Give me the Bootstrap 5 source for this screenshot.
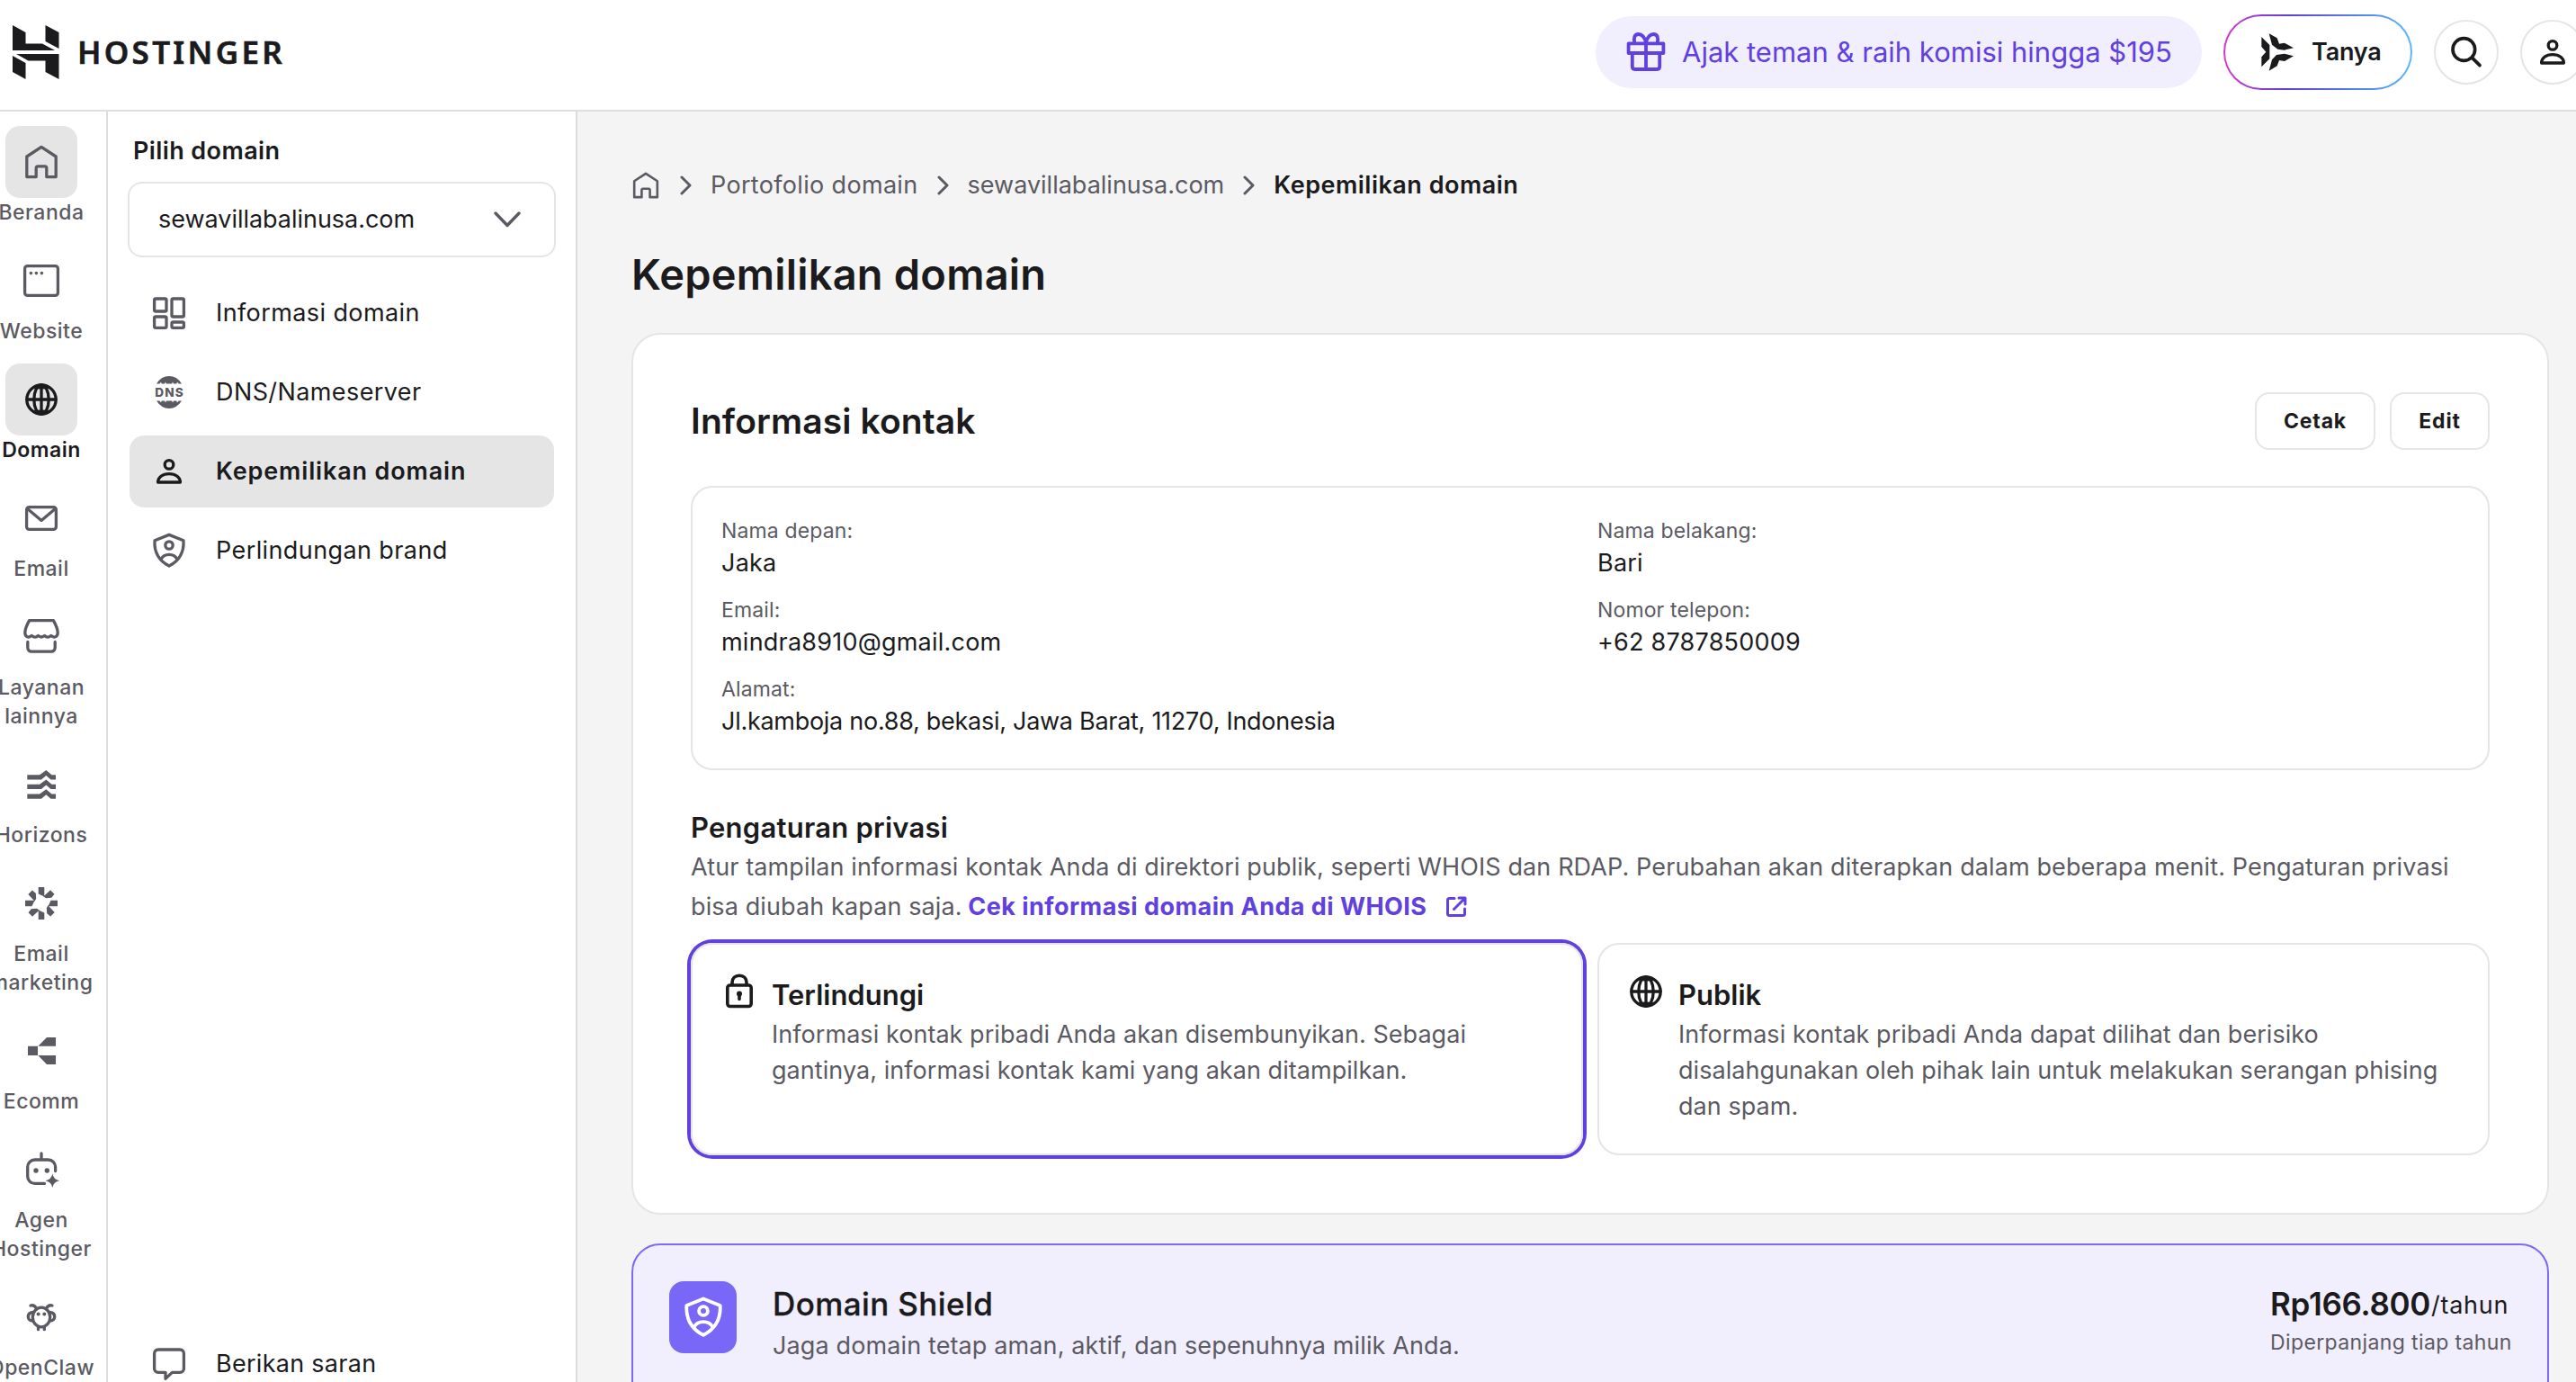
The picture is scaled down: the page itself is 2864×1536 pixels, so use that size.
<!DOCTYPE html>
<html lang="id">
<head>
<meta charset="utf-8">
<meta name="viewport" content="width=device-width, initial-scale=1">
<title>Kepemilikan domain</title>
<link href="https://cdn.jsdelivr.net/npm/bootstrap@5.3.0/dist/css/bootstrap.min.css" rel="stylesheet">
<style>
:root{--ink:#1b1b1d;--muted:#5b5a62;--line:#e5e5e5;--violet:#6040df;--soft:#f1eefd}
html,body{height:100%;overflow:hidden}
body{font-family:Inter,"Liberation Sans",sans-serif;font-size:27px;line-height:40px;color:var(--ink);background:#f4f4f4}
svg{display:block;flex:none;fill:none;stroke:currentColor;stroke-width:1.65;stroke-linejoin:round;stroke-linecap:round}
svg .solid{fill:currentColor;stroke:none}
a{color:inherit;text-decoration:none}
.ic{width:48px;height:48px}
.topbar{height:124px;border-bottom:2px solid #dedede;padding:0 0 6px 14px;flex:none}
.wordmark{font:600 35px/48px "Noto Sans","Open Sans",sans-serif;letter-spacing:3.3px;margin-left:20px;-webkit-text-stroke:.6px currentColor}
.topright{gap:24px;margin-right:-10px}
.promo{height:80px;width:674px;border-radius:40px;background:var(--soft);color:var(--violet);padding-left:32px;gap:16px;font-size:31px;white-space:nowrap}
.promo svg{stroke-width:1.9}
.ask{width:210px;height:84px;border:2px solid transparent;border-radius:42px;padding-left:38px;gap:10px;font-weight:600;letter-spacing:-.2px;background:linear-gradient(#fff,#fff) padding-box,linear-gradient(90deg,#d63bd1 0,#613fdd 34%,#5385ee 72%,#5cb8ff 100%) border-box}
.round-btn{width:72px;height:72px;border:2px solid var(--line);border-radius:50%;flex:none}
.find{stroke-width:11}
.rail{width:120px;border-right:2px solid #dcdcdc;padding-top:16px;gap:20px;flex:none}
.rail-item{width:200px;margin-left:-54px;font-size:23px;line-height:32px;font-weight:500;color:var(--muted);letter-spacing:.5px;text-align:center}
.rail-box{width:80px;height:80px;border-radius:16px;margin:0 auto}
.rail-box.on{background:#e5e5e5}
.rail-item.now,.rail-item.now .rail-box{color:var(--ink)}
.rail-item.now{font-weight:600;letter-spacing:.5px}
.heavy{stroke-width:3.3}
.side{width:522px;border-right:2px solid #dcdcdc;padding:24px 22px 0 22px;flex:none}
.side-label{font-weight:600;padding-left:6px;letter-spacing:.4px}
.picker{height:84px;border:2px solid var(--line);border-radius:16px;margin:14px 0 22px;padding:0 37px 0 32px;letter-spacing:-.03px}
.picker svg{stroke-width:3.4;color:var(--muted)}
.side-nav{gap:8px;padding:0 2px}
.side-link{height:80px;border-radius:16px;padding-left:20px;gap:28px;letter-spacing:.4px}
.side-link svg{color:var(--muted)}
.side-link.now{background:#e5e5e5;font-weight:600;letter-spacing:.85px}
.side-link.now svg{color:var(--ink)}
.side-foot{margin:auto 0 -20px;padding:0 2px}
.side-foot .side-link{letter-spacing:.28px}
.page{padding:62px 30px 0 60px;min-width:0;height:1412px;overflow:hidden}
.crumbs{gap:20px;color:var(--muted);margin-left:-3px}
.crumbs svg.home{width:38px;height:38px;margin-right:-2px}
.crumbs svg.chev{width:15px;height:22px;stroke-width:3}
.crumbs a:first-of-type{letter-spacing:.33px}
.crumbs b{font-weight:600;color:var(--ink);letter-spacing:.5px}
h1{font-size:47px;line-height:64px;font-weight:600;margin:47px 0 33px;letter-spacing:.18px}
.panel{background:#fff;border:2px solid var(--line);border-radius:32px;padding:64px}
h2{font-size:39px;line-height:48px;font-weight:600;margin:0;letter-spacing:.1px}
.act{height:64px;border:2px solid var(--line);border-radius:16px;font-size:23px;font-weight:700;letter-spacing:.8px;padding:0;color:var(--ink);background:#fff}
.act:first-child{width:134px}.act:last-child{width:111px}
.facts{margin-top:40px;border:2px solid var(--line);border-radius:24px;padding:32px;row-gap:16px;display:grid;grid-template-columns:974px 1fr}
.facts dt{font-size:23px;line-height:32px;font-weight:400;color:var(--muted);letter-spacing:.14px}
.facts dd{margin:0;letter-spacing:.22px}
.facts dd.long{letter-spacing:-.28px;white-space:nowrap}
h3{font-size:31px;line-height:46px;font-weight:600;margin:41px 0 0;letter-spacing:.25px}
.note{line-height:44px;color:var(--muted);letter-spacing:.115px;margin:-1px 0 18px;white-space:nowrap}
.note a{color:var(--violet);font-weight:700;letter-spacing:.45px;margin-left:-1px}
.note svg{display:inline-block;width:24px;height:24px;margin-left:14px;vertical-align:-3px;stroke-width:3}
.choice{border:2px solid var(--line);border-radius:24px;height:236px;padding:28px 0 0 28px;gap:12px;flex:1 1 0;min-width:0}
.choice.picked{box-shadow:0 0 0 4px var(--violet)}
.choice h4{font-size:31px;line-height:48px;font-weight:600;margin:4px 0 0}
.choice p,.shield p{color:var(--muted);margin:0;white-space:nowrap;letter-spacing:.05px}
.lock{stroke-width:3.6}
.shield{margin-top:32px;height:260px;border:2px solid #7c69f4;border-radius:32px;background:var(--soft);padding:40px;gap:40px}
.tile{width:75px;height:80px;border-radius:16px;background:#7967f7;color:#fff;flex:none}
.tile svg{width:56px;height:56px}
.shield h4{font-size:35px;line-height:48px;font-weight:500;margin:1px 0 3px;letter-spacing:.4px;-webkit-text-stroke:.3px currentColor}
.shield p{letter-spacing:.12px}
.price{width:268px;padding-top:1px}
.price b{font-size:35px;line-height:48px;font-weight:600;letter-spacing:-.3px}
.price span{position:relative;top:-2px;letter-spacing:.7px;margin-left:1px}
.price small{display:block;font-size:23px;line-height:36px;color:var(--muted);letter-spacing:.38px;white-space:nowrap;margin-top:1px}
</style>
<script src="https://cdn.jsdelivr.net/npm/bootstrap@5.3.0/dist/js/bootstrap.bundle.min.js"></script>
</head>
<body class="d-flex flex-column">
<svg width="0" height="0" class="d-none">
  <symbol id="home" viewBox="0 0 24 24"><path d="M3.900 9 12 3.700 20.100 9v11.300h-5.200v-4.900c0-.6-.4-1-1-1h-3.800c-.6 0-1 .4-1 1v4.900H3.900z"/></symbol>
  <symbol id="globe" viewBox="0 0 24 24"><circle cx="12" cy="12" r="8.100"/><ellipse cx="12" cy="12" rx="4.100" ry="8.100"/><path d="M12 4v16M4 12h16"/><path class="solid" d="M7 5.600Q12 1.800 17 5.600 12 7 7 5.600zM7 18.400q5 3.800 10 0-5-1.400-10 0z"/></symbol>
  <symbol id="user" viewBox="0 0 24 24"><circle cx="12" cy="8.200" r="2.400"/><path d="M5.800 18c0-2.700 2.500-4.700 6.200-4.700s6.200 2 6.200 4.700z"/></symbol>
  <symbol id="shield" viewBox="0 0 24 24"><path d="M12 3.200 20 6.400C20.400 13 17.600 17.600 12 20.500 6.400 17.600 3.600 13 4 6.400z"/><circle cx="12" cy="9" r="2.100"/><path d="M7.500 16.800C8.400 15 10 14.200 12 14.200s3.600.8 4.500 2.600"/></symbol>
  <symbol id="chev" viewBox="0 0 15 22"><path d="m3 2 9 9-9 9"/></symbol>
</svg>

<header class="topbar bg-white d-flex align-items-center">
  <svg width="52" height="60" viewBox="0 0 52 60"><path class="solid" d="M0 0 14.500 8v12.500H33L47 28H0zM36.500 0 51.500 8v18L36.500 18zM4 32h47.500v28L36.500 52V39.500H17.500zM0 34l14.500 8v18L0 52z"/></svg>
  <span class="wordmark">HOSTINGER</span>
  <div class="topright d-flex align-items-center ms-auto">
    <a class="promo d-flex align-items-center" href="#">
      <svg class="ic" viewBox="0 0 24 24"><path d="M2.300 7.200h19.400v5.300H2.300zM4.400 12.600v7.400c0 .9.600 1.500 1.500 1.500h12.200c.9 0 1.500-.6 1.500-1.500v-7.400M12 7v14.500M12 7C11.500 3.500 9.500 2 7.800 2 5.600 2 5 4 5.700 7M12 7c.5-3.500 2.500-5 4.200-5 2.200 0 2.800 2 2.100 5"/></svg>
      <span>Ajak teman &amp; raih komisi hingga $195</span></a>
    <a class="ask d-flex align-items-center" href="#">
      <svg class="ic" viewBox="96 72 144 144"><path class="solid" d="m103 93 27 27v46l-27 27v-33l15-17-15-17zM128 82l27 15 7 19 17-3 31 17-31 7-22-3-19-15zM128 206l27-16 7-19 18 3 30-17-31-8-26 4-15 16z"/></svg>
      <span>Tanya</span></a>
    <a class="round-btn d-flex align-items-center justify-content-center" href="#"><svg class="ic find" viewBox="714 72 144 144"><circle cx="778" cy="135" r="37"/><path d="m806 163 25 25"/></svg></a>
    <a class="round-btn d-flex align-items-center justify-content-center" href="#"><svg class="ic"><use href="#user"/></svg></a>
  </div>
</header>

<div class="d-flex flex-grow-1 overflow-hidden">
  <nav class="rail bg-white d-flex flex-column">
    <a class="rail-item" href="#"><div class="rail-box on d-flex align-items-center justify-content-center"><svg class="ic"><use href="#home"/></svg></div>Beranda</a>
    <a class="rail-item" href="#"><div class="rail-box d-flex align-items-center justify-content-center"><svg class="ic" viewBox="0 0 24 24"><rect x="2.800" y="3.800" width="18.400" height="16.400" rx="1.500"/><g class="solid"><circle cx="6.200" cy="7.800" r=".9"/><circle cx="9.200" cy="7.800" r=".9"/><circle cx="12.200" cy="7.800" r=".9"/></g></svg></div>Website</a>
    <a class="rail-item now" href="#"><div class="rail-box on d-flex align-items-center justify-content-center"><svg class="ic"><use href="#globe"/></svg></div>Domain</a>
    <a class="rail-item" href="#"><div class="rail-box d-flex align-items-center justify-content-center"><svg class="ic" viewBox="0 0 24 24"><rect x="3.800" y="5.800" width="16.400" height="12.400" rx="1.500"/><path d="m4.300 6.800 7.700 6.400 7.700-6.400"/></svg></div>Email</a>
    <a class="rail-item" href="#"><div class="rail-box d-flex align-items-center justify-content-center"><svg class="ic" viewBox="0 0 24 24"><path d="M5.300 2.800h13.400c1.500 2.700 2.400 4.800 2.400 6.800 0 2.300-2.100 3.200-3.700 1.600-1.300 1.200-2.500 1.200-3.600 0-1.200 1.100-2.400 1.100-3.600 0-1.100 1.200-2.300 1.200-3.600 0C5 12.800 2.900 11.900 2.900 9.600c0-2 .9-4.100 2.400-6.800zM4.400 14.700v3.200c0 1.300.9 2.200 2.200 2.200h10.800c1.300 0 2.200-.9 2.200-2.200v-3.200"/></svg></div>Layanan<br>lainnya</a>
    <a class="rail-item" href="#"><div class="rail-box d-flex align-items-center justify-content-center"><svg class="ic" viewBox="0 0 48 48"><g class="solid"><path id="hz" d="M8.300 13.200H22L29.300 8l6.200 5.200H40v5.300h-5.500L29.300 14 24 18.500H8.300z"/><use href="#hz" y="10.600"/><use href="#hz" y="21.200"/></g></svg></div>Horizons</a>
    <a class="rail-item" href="#"><div class="rail-box d-flex align-items-center justify-content-center"><svg class="ic" viewBox="-24 -24 48 48"><g class="solid"><path id="ray" d="M-3.300-18h6.600v10.500l-6.600-3zM-14.700-10l4.500-4.500 4 3.300.4 6-1.600 3z"/><use href="#ray" transform="rotate(90)"/><use href="#ray" transform="rotate(180)"/><use href="#ray" transform="rotate(270)"/></g></svg></div>Email<br>marketing</a>
    <a class="rail-item" href="#"><div class="rail-box d-flex align-items-center justify-content-center"><svg class="ic" viewBox="0 0 48 48"><path class="solid" d="M9 18.700h11V29H9zM40 9H30l-9.700 9.700H40zM20.300 29H40v10H30z"/></svg></div>Ecomm</a>
    <a class="rail-item" href="#"><div class="rail-box d-flex align-items-center justify-content-center"><svg class="ic heavy" viewBox="0 0 48 48"><path d="M24 6v6M39.600 25.500V21a8 8 0 0 0-8-8H16.700a8 8 0 0 0-8 8v10.400a8 8 0 0 0 8 8h10.800"/><g class="solid"><circle cx="18" cy="25" r="2.700"/><circle cx="30.300" cy="25" r="2.700"/><path d="M36.300 28.500q1.200 6.600 7.800 7.800-6.600 1.200-7.800 7.800-1.200-6.600-7.800-7.800 6.600-1.200 7.800-7.800z"/></g></svg></div>Agen<br>Hostinger</a>
    <a class="rail-item" href="#"><div class="rail-box d-flex align-items-center justify-content-center"><svg class="ic heavy" viewBox="0 0 48 48"><ellipse cx="24" cy="24" rx="9.700" ry="10.800"/><path d="M12 11c3-.8 5 .7 6.300 3M36 11c-3-.8-5 .7-6.300 3M14.500 18.500c-3.300.3-5.200 2.300-5.200 5s2 4.500 5.200 4.500M33.500 18.500c3.300.3 5.200 2.300 5.200 5s-2 4.500-5.200 4.500M20.500 35v2.700M27.300 35v2.700"/><g class="solid"><circle cx="20.600" cy="20.600" r="2"/><circle cx="27.300" cy="20.600" r="2"/></g></svg></div>OpenClaw</a>
  </nav>

  <aside class="side bg-white d-flex flex-column">
    <div class="side-label">Pilih domain</div>
    <div class="picker d-flex align-items-center justify-content-between">
      <span>sewavillabalinusa.com</span>
      <svg width="30" height="18" viewBox="0 0 30 18"><path d="m2 2 13 13.500L28 2"/></svg>
    </div>
    <nav class="side-nav d-flex flex-column">
      <a class="side-link d-flex align-items-center" href="#"><svg class="ic" viewBox="0 0 24 24"><rect x="3.800" y="4" width="6.700" height="7" rx=".8"/><rect x="13.500" y="4" width="6.700" height="10" rx=".8"/><rect x="3.800" y="14" width="6.700" height="6.200" rx=".8"/><rect x="13.500" y="17" width="6.700" height="3.200" rx=".8"/></svg>Informasi domain</a>
      <a class="side-link d-flex align-items-center" href="#"><svg class="ic" viewBox="0 0 24 24"><path class="solid" d="M5 7.200Q7.700 3 12 3t7 4.200h-1.700l-.8-1-.3 1h-1.700l-.5-1-.4 1h-3.200l-.4-1-.5 1H7.800l-.3-1-.8 1zM5 16.800Q7.700 21 12 21t7-4.200h-1.700l-.8 1-.3-1h-1.700l-.5 1-.4-1h-3.200l-.4 1-.5-1H7.800l-.3 1-.8-1z"/><text class="solid" x="12.300" y="14.500" text-anchor="middle" font-size="6.800" font-weight="800" letter-spacing=".55">DNS</text></svg>DNS/Nameserver</a>
      <a class="side-link now d-flex align-items-center" href="#"><svg class="ic"><use href="#user"/></svg>Kepemilikan domain</a>
      <a class="side-link d-flex align-items-center" href="#"><svg class="ic"><use href="#shield"/></svg>Perlindungan brand</a>
    </nav>
    <div class="side-foot">
      <a class="side-link d-flex align-items-center" href="#"><svg class="ic" viewBox="0 0 24 24"><path d="M6 4h12c1.300 0 2.200.9 2.200 2.200v8.300c0 1.300-.9 2.200-2.200 2.200h-4.300L10 20.200v-3.500H6c-1.300 0-2.200-.9-2.200-2.200V6.200C3.800 4.900 4.700 4 6 4z"/></svg>Berikan saran</a>
    </div>
  </aside>

  <main class="page flex-grow-1">
    <nav class="crumbs d-flex align-items-center">
      <svg class="home"><use href="#home"/></svg>
      <svg class="chev"><use href="#chev"/></svg>
      <a href="#">Portofolio domain</a>
      <svg class="chev"><use href="#chev"/></svg>
      <a href="#">sewavillabalinusa.com</a>
      <svg class="chev"><use href="#chev"/></svg>
      <b>Kepemilikan domain</b>
    </nav>
    <h1>Kepemilikan domain</h1>

    <section class="panel">
      <div class="d-flex align-items-center justify-content-between">
        <h2>Informasi kontak</h2>
        <div class="d-flex gap-3"><button class="act">Cetak</button><button class="act">Edit</button></div>
      </div>
      <dl class="facts mb-0">
        <div><dt>Nama depan:</dt><dd>Jaka</dd></div>
        <div><dt>Nama belakang:</dt><dd>Bari</dd></div>
        <div><dt>Email:</dt><dd>mindra8910@gmail.com</dd></div>
        <div><dt>Nomor telepon:</dt><dd>+62 8787850009</dd></div>
        <div><dt>Alamat:</dt><dd class="long">Jl.kamboja no.88, bekasi, Jawa Barat, 11270, Indonesia</dd></div>
      </dl>
      <h3>Pengaturan privasi</h3>
      <p class="note">Atur tampilan informasi kontak Anda di direktori publik, seperti WHOIS dan RDAP. Perubahan akan diterapkan dalam beberapa menit. Pengaturan privasi<br>bisa diubah kapan saja. <a href="#">Cek informasi domain Anda di WHOIS <svg viewBox="0 0 24 24"><path d="M10 2.500H4.500c-1.200 0-2 .8-2 2v15c0 1.200.8 2 2 2h15c1.200 0 2-.8 2-2V14M15 2h7v7M21.500 2.500 9.500 14.500"/></svg></a></p>
      <div class="d-flex gap-3">
        <div class="choice picked d-flex">
          <svg class="ic lock" viewBox="0 0 48 48"><rect x="10.800" y="17" width="26.400" height="23.500" rx="3"/><path d="M16 16.500V14c0-5 3.300-7.800 8-7.800s8 2.800 8 7.800v2.500M24 27v5.500"/><circle class="solid" cx="24" cy="26.500" r="3"/></svg>
          <div><h4>Terlindungi</h4><p>Informasi kontak pribadi Anda akan disembunyikan. Sebagai<br>gantinya, informasi kontak kami yang akan ditampilkan.</p></div>
        </div>
        <div class="choice d-flex">
          <svg class="ic"><use href="#globe"/></svg>
          <div><h4>Publik</h4><p>Informasi kontak pribadi Anda dapat dilihat dan berisiko<br>disalahgunakan oleh pihak lain untuk melakukan serangan phising<br>dan spam.</p></div>
        </div>
      </div>
    </section>

    <section class="shield d-flex">
      <div class="tile d-flex align-items-center justify-content-center"><svg><use href="#shield"/></svg></div>
      <div class="flex-grow-1"><h4>Domain Shield</h4><p>Jaga domain tetap aman, aktif, dan sepenuhnya milik Anda.</p></div>
      <div class="price text-nowrap"><b>Rp166.800</b><span>/tahun</span><small>Diperpanjang tiap tahun</small></div>
    </section>
  </main>
</div>
</body>
</html>
